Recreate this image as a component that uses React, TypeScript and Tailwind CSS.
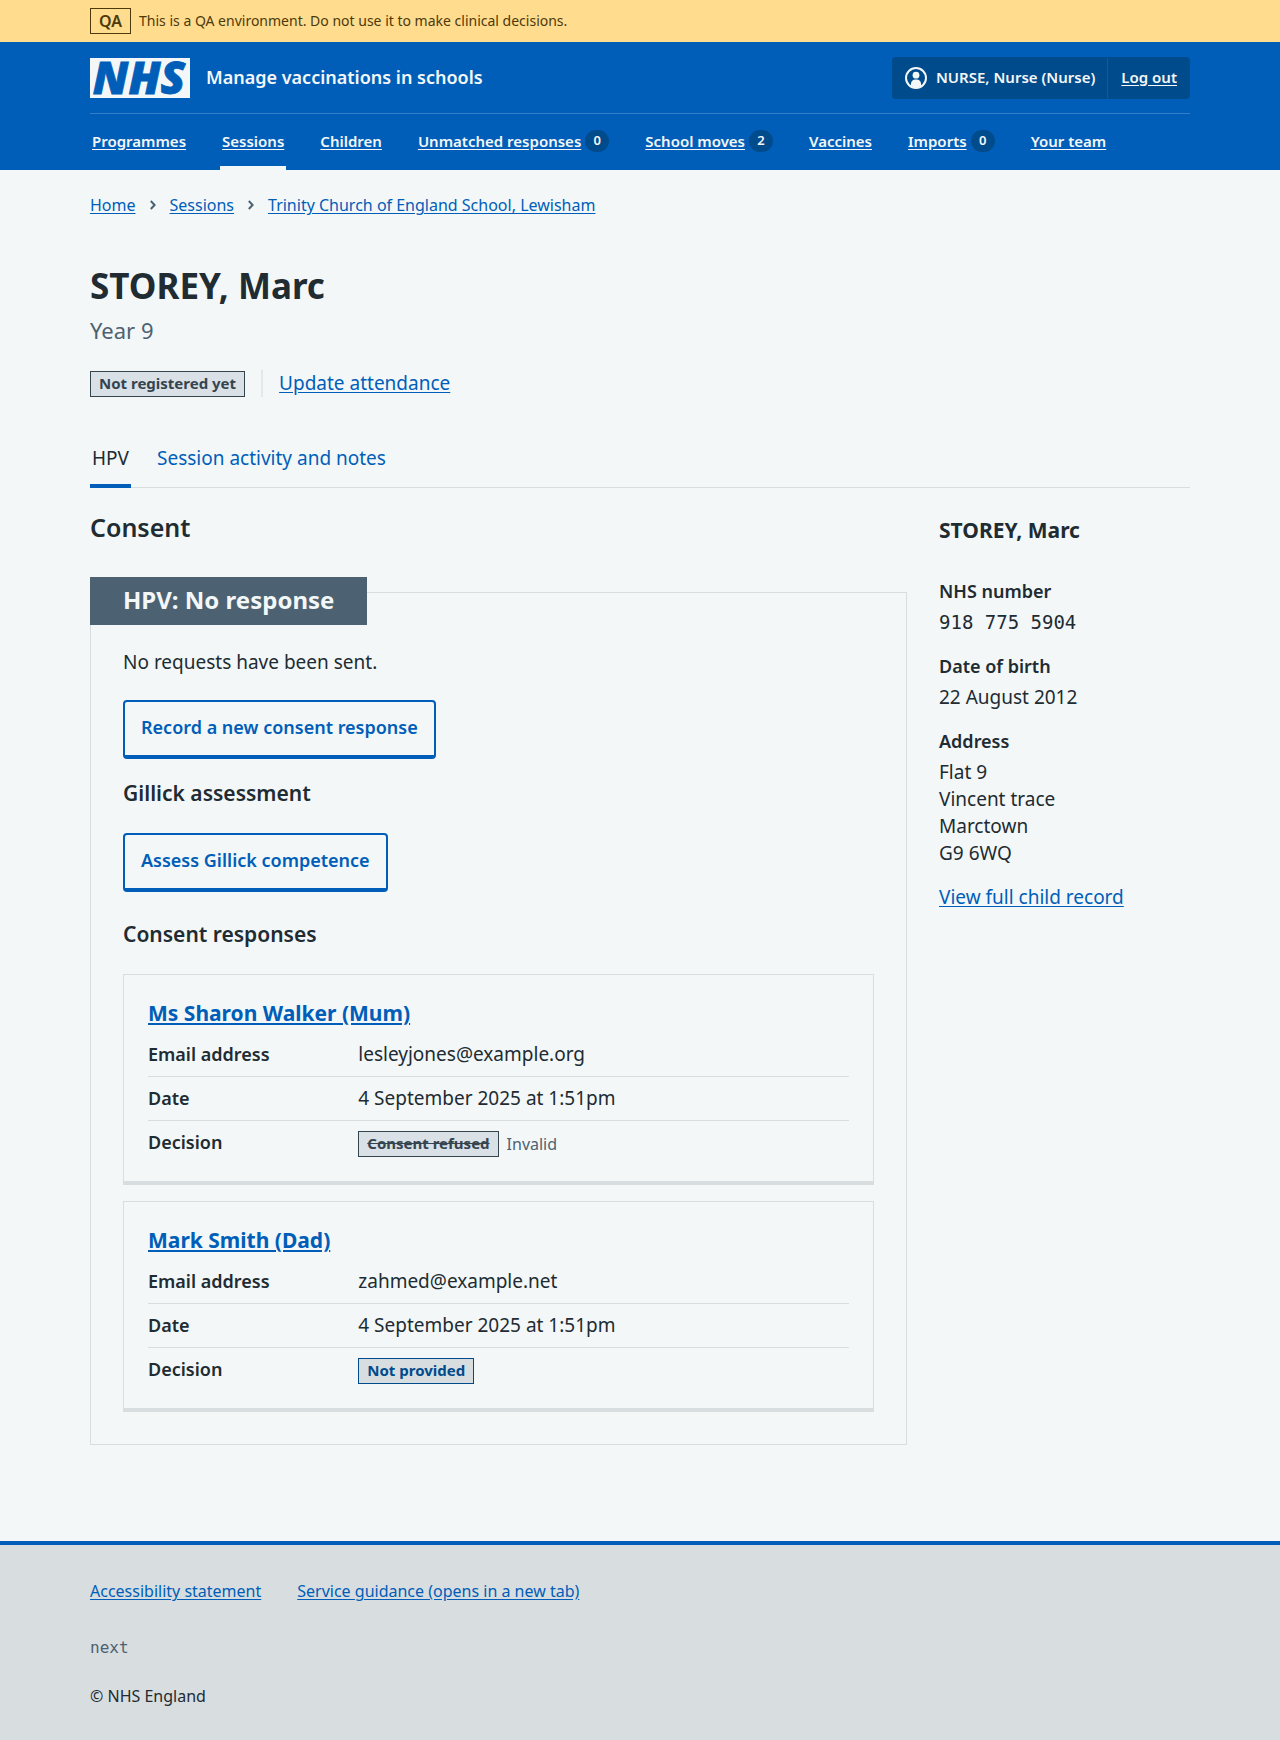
import React from "react";

const link = "text-[#005eb8] underline underline-offset-2";

const navItems: { label: string; count?: number; current?: boolean }[] = [
  { label: "Programmes" },
  { label: "Sessions", current: true },
  { label: "Children" },
  { label: "Unmatched responses", count: 0 },
  { label: "School moves", count: 2 },
  { label: "Vaccines" },
  { label: "Imports", count: 0 },
  { label: "Your team" },
];

function Container({ children, className = "" }: { children: React.ReactNode; className?: string }) {
  return (
    <div className="px-8">
      <div className={`mx-auto max-w-[1100px] ${className}`}>{children}</div>
    </div>
  );
}

function NhsLogo() {
  return (
    <svg viewBox="0 0 100 40" className="h-10 w-[100px] overflow-visible" role="img" aria-label="NHS">
      <rect width="100" height="40" fill="#f3f7f8" />
      <text
        x="49"
        y="36"
        textAnchor="middle"
        fontFamily='"Open Sans", "Noto Sans", sans-serif'
        fontSize="45"
        fontWeight="800"
        fontStyle="italic"
        fill="#005eb8"
        stroke="#005eb8"
        strokeWidth="0.8"
      >
        NHS
      </text>
    </svg>
  );
}

function UserIcon() {
  return (
    <svg viewBox="0 0 24 24" className="size-6" aria-hidden="true">
      <circle cx="12" cy="12" r="10" fill="none" stroke="#f3f7f8" strokeWidth="2" />
      <circle cx="12" cy="9.2" r="3.4" fill="#f3f7f8" />
      <path d="M7 20v-2.4a4.2 4.2 0 0 1 4.2-4.2h1.6a4.2 4.2 0 0 1 4.2 4.2V20a10 10 0 0 1-10 0z" fill="#f3f7f8" />
    </svg>
  );
}

function Chevron() {
  return (
    <svg viewBox="0 0 8 12" className="h-3 w-2" aria-hidden="true">
      <path d="M1.8 2l3.8 4-3.8 4" fill="none" stroke="#4c6272" strokeWidth="2" />
    </svg>
  );
}

function Tag({ children, tone = "grey" }: { children: React.ReactNode; tone?: "grey" | "blue" }) {
  const colours =
    tone === "blue" ? "border-[#004b8c] text-[#004b8c] bg-[#d8dde0]" : "border-[#354550] text-[#354550] bg-[#d9e0e6]";
  return (
    <strong className={`block h-[26px] border px-2 text-[15px] leading-[23px] font-bold whitespace-nowrap ${colours}`}>
      {children}
    </strong>
  );
}

function SecondaryButton({ children }: { children: React.ReactNode }) {
  return (
    <button
      type="button"
      className="block h-[59px] rounded-[4px] border-2 border-b-4 border-[#005eb8] px-4 pb-1 text-lg font-semibold text-[#005eb8]"
    >
      {children}
    </button>
  );
}

function ResponseCard({ name, email, decision }: { name: string; email: string; decision: React.ReactNode }) {
  const rows: [string, React.ReactNode][] = [
    ["Email address", email],
    ["Date", "4 September 2025 at 1:51pm"],
    ["Decision", <div className="flex items-center gap-2 pt-[3px]">{decision}</div>],
  ];
  return (
    <article className="h-[211px] border border-b-4 border-[#d8dde0] px-6 pt-6">
      <h4 className="text-[21px] leading-7 font-bold">
        <a href="#response" className={link}>
          {name}
        </a>
      </h4>
      <dl className="mt-1.5">
        {rows.map(([term, value], i) => (
          <div
            key={term}
            className={`grid h-11 grid-cols-[30%_1fr] pt-[7px] leading-7 ${i < 2 ? "border-b border-[#d8dde0]" : ""}`}
          >
            <dt className="text-lg leading-7 font-semibold">{term}</dt>
            <dd className="text-[19px] leading-7">{value}</dd>
          </div>
        ))}
      </dl>
    </article>
  );
}

export default function App() {
  return (
    <div className="bg-[#f3f7f8] font-['Noto_Sans',sans-serif] text-[#212b32]">
      <div className="bg-[#ffdc8e] text-[#4d3a0b]">
        <Container className="flex h-[42px] items-center gap-2">
          <strong className="border border-[#4d3a0b] px-2 text-base leading-6 font-semibold">QA</strong>
          <span className="text-sm">This is a QA environment. Do not use it to make clinical decisions.</span>
        </Container>
      </div>

      <header className="bg-[#005eb8] text-[#f3f7f8]">
        <Container>
          <div className="flex h-[72px] items-center justify-between border-b border-[#337ec6]">
            <a href="#home" className="flex items-center gap-4">
              <NhsLogo />
              <span className="pb-0.5 text-lg font-semibold">Manage vaccinations in schools</span>
            </a>
            <div className="flex h-[42px] items-center rounded-[4px] bg-[#004b8c] text-[15px] font-semibold">
              <div className="flex h-10 items-center gap-2 border-r border-[#005eb8] px-3">
                <UserIcon />
                <span>NURSE, Nurse (Nurse)</span>
              </div>
              <a href="#logout" className="px-[13px] underline underline-offset-2">
                Log out
              </a>
            </div>
          </div>
          <nav className="flex h-14 gap-8" aria-label="Menu">
            {navItems.map(({ label, count, current }) => (
              <a
                key={label}
                href="#menu"
                className={`flex items-center gap-1 border-b-4 px-[2px] pt-0.5 text-[15px] font-semibold whitespace-nowrap ${
                  current ? "border-[#f3f7f8]" : "border-transparent"
                }`}
              >
                <span className="underline underline-offset-2">{label}</span>
                {count !== undefined && (
                  <span className="flex h-[22px] w-6 items-center justify-center rounded-full bg-[#004b8c] text-[13px]">
                    {count}
                  </span>
                )}
              </a>
            ))}
          </nav>
        </Container>
      </header>

      <Container>
        <nav className="flex items-center gap-[13px] pt-[23px] text-base leading-6" aria-label="Breadcrumb">
          <a href="#home" className={link}>
            Home
          </a>
          <Chevron />
          <a href="#sessions" className={link}>
            Sessions
          </a>
          <Chevron />
          <a href="#school" className={link}>
            Trinity Church of England School, Lewisham
          </a>
        </nav>

        <main className="pt-[45px]">
          <h1 className="text-[35px] leading-[48px] font-bold">STOREY, Marc</h1>
          <p className="pt-1 text-[22px] leading-8 text-[#4c6272]">Year 9</p>
          <div className="flex items-center pt-6">
            <Tag>Not registered yet</Tag>
            <div className="ml-4 flex h-[27px] items-center border-l-2 border-[#e4e8ea] pl-4">
              <a href="#attendance" className={`text-[19px] ${link}`}>
                Update attendance
              </a>
            </div>
          </div>

          <nav className="mt-8 flex h-[59px] gap-6 border-b border-[#d8dde0] text-[19px]" aria-label="Programme">
            <a href="#hpv" className="-mb-px flex items-center border-b-4 border-[#005eb8] px-[2px] pt-1">
              HPV
            </a>
            <a
              href="#activity"
              className="-mb-px flex items-center border-b-4 border-transparent px-[2px] pt-1 text-[#005eb8]"
            >
              Session activity and notes
            </a>
          </nav>

          <div className="grid grid-cols-[1fr_251px] gap-8">
            <div>
              <h2 className="pt-[23px] text-[25px] leading-8 font-semibold">Consent</h2>

              <section className="mt-[49px] border border-[#d8dde0] px-8 pb-8">
                <h3 className="-mt-4 -ml-[33px] w-fit bg-[#4c6272] px-[33px] pb-0.5 text-2xl leading-[46px] font-bold text-[#f3f7f8]">
                  HPV: No response
                </h3>
                <p className="pt-6 text-[19px] leading-[27px]">No requests have been sent.</p>
                <div className="pt-6">
                  <SecondaryButton>Record a new consent response</SecondaryButton>
                </div>
                <h3 className="pt-[18px] text-[21px] leading-8 font-semibold">Gillick assessment</h3>
                <div className="pt-6">
                  <SecondaryButton>Assess Gillick competence</SecondaryButton>
                </div>
                <h3 className="pt-[26px] text-[21px] leading-8 font-semibold">Consent responses</h3>
                <div className="flex flex-col gap-4 pt-6">
                  <ResponseCard
                    name="Ms Sharon Walker (Mum)"
                    email="lesleyjones@example.org"
                    decision={
                      <>
                        <Tag>
                          <s>Consent refused</s>
                        </Tag>
                        <span className="text-base leading-6 text-[#4c6272]">Invalid</span>
                      </>
                    }
                  />
                  <ResponseCard
                    name="Mark Smith (Dad)"
                    email="zahmed@example.net"
                    decision={<Tag tone="blue">Not provided</Tag>}
                  />
                </div>
              </section>
            </div>

            <aside className="pt-[26px] text-[19px] leading-[27px]">
              <h2 className="text-[21px] leading-8 font-bold">STOREY, Marc</h2>
              <dl className="pt-[31px]">
                <dt className="text-lg leading-7 font-semibold">NHS number</dt>
                <dd className="pt-1 font-['DejaVu_Sans_Mono',monospace]">918 775 5904</dd>
                <dt className="pt-4 text-lg leading-7 font-semibold">Date of birth</dt>
                <dd className="pt-1">22 August 2012</dd>
                <dt className="pt-4 text-lg leading-7 font-semibold">Address</dt>
                <dd className="pt-1">
                  Flat 9<br />
                  Vincent trace
                  <br />
                  Marctown
                  <br />
                  G9 6WQ
                </dd>
              </dl>
              <p className="pt-[17px]">
                <a href="#record" className={link}>
                  View full child record
                </a>
              </p>
            </aside>
          </div>
        </main>
      </Container>

      <footer className="mt-24 border-t-4 border-[#005eb8] bg-[#d8dde0] text-base leading-6">
        <Container className="pt-[34px] pb-8">
          <div className="flex gap-9">
            <a href="#accessibility" className={link}>
              Accessibility statement
            </a>
            <a href="#guidance" className={link}>
              Service guidance (opens in a new tab)
            </a>
          </div>
          <p className="pt-[33px] font-['DejaVu_Sans_Mono',monospace] text-[#4c6272]">next</p>
          <p className="pt-6">© NHS England</p>
        </Container>
      </footer>
    </div>
  );
}
